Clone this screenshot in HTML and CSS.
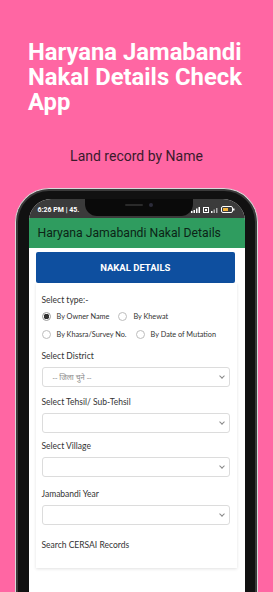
FILE: index.html
```html
<!DOCTYPE html>
<html lang="en">
<head>
  <meta charset="UTF-8" />
  <meta name="viewport" content="width=device-width, initial-scale=1.0" />
  <title>Haryana Jamabandi Nakal Details Check App</title>
  <link rel="stylesheet" href="styles.css">
</head>
<body>
  <h1 class="headline">Haryana Jamabandi Nakal Details Check App</h1>
  <p class="tagline">Land record by Name</p>

  <div class="phone">
    <div class="notch"><span class="speaker"></span><span class="camera"></span></div>
    <div class="screen">
      <div class="status-bar">
        <span class="clock">6:26 PM | 45.</span>
        <span class="status-icons">
          <svg width="10" height="6" viewBox="0 0 10 6"><rect x="0" y="4" width="1.5" height="2" fill="#fff"/><rect x="2.5" y="3" width="1.5" height="3" fill="#fff"/><rect x="5" y="1.5" width="1.5" height="4.5" fill="#fff"/><rect x="7.5" y="0" width="1.5" height="6" fill="#fff"/></svg>
          <svg width="6" height="6" viewBox="0 0 6 6"><rect x="0.5" y="0.5" width="5" height="5" fill="none" stroke="#fff"/><rect x="2" y="2" width="2" height="2" fill="#fff"/></svg>
          <svg width="8" height="6" viewBox="0 0 8 6"><rect x="0" y="4" width="1.5" height="2" fill="#fff"/><rect x="2.5" y="2.5" width="1.5" height="3.5" fill="#aaa"/><rect x="5" y="1" width="1.5" height="5" fill="#aaa"/></svg>
          <svg width="14" height="7" viewBox="0 0 14 7"><rect x="0.5" y="0.5" width="11" height="6" rx="1.5" fill="none" stroke="#fff"/><rect x="2" y="2" width="5" height="3" fill="#f2b33d"/><rect x="12" y="2.5" width="1.5" height="2" fill="#fff"/></svg>
        </span>
      </div>

      <div class="app-bar">Haryana Jamabandi Nakal Details</div>

      <div class="content">
        <div class="card-head">NAKAL DETAILS</div>

        <div class="card-body">
          <div class="label">Select type:-</div>
          <div class="radio-row">
            <span class="radio checked"></span><span class="radio-text">By Owner Name</span>
            <span class="radio"></span><span class="radio-text">By Khewat</span>
          </div>
          <div class="radio-row">
            <span class="radio"></span><span class="radio-text">By Khasra/Survey No.</span>
            <span class="radio"></span><span class="radio-text">By Date of Mutation</span>
          </div>

          <div class="field">
            <div class="label">Select District</div>
            <div class="select"><span class="placeholder">-- जिला चुने --</span><span class="chevron"></span></div>
          </div>

          <div class="field">
            <div class="label">Select Tehsil/ Sub-Tehsil</div>
            <div class="select"><span class="placeholder"></span><span class="chevron"></span></div>
          </div>

          <div class="field tight">
            <div class="label">Select Village</div>
            <div class="select"><span class="placeholder"></span><span class="chevron"></span></div>
          </div>

          <div class="field loose">
            <div class="label">Jamabandi Year</div>
            <div class="select"><span class="placeholder"></span><span class="chevron"></span></div>
          </div>

          <div class="field cersai">
            <div class="label">Search CERSAI Records</div>
          </div>
        </div>
      </div>
    </div>
  </div>
</body>
</html>
```

FILE: styles.css
```css
* {
  box-sizing: border-box;
}

body {
  margin: 0;
  padding: 0;
  background: #ff66a3;
  height: 100vh;
  overflow: hidden;
  font-family: Roboto, "Liberation Sans", sans-serif;
}

.headline {
  margin: 40px 10px 0 28px;
  color: #fff;
  font-size: 23.8px;
  line-height: 25px;
  font-weight: 700;
}

.tagline {
  margin: 32px 0 0;
  text-align: center;
  font-size: 14px;
  line-height: 18px;
  color: #3a1a2b;
}

.phone {
  position: relative;
  margin: 23px 0 0 15px;
  width: 243px;
  height: 420px;
  background: #111;
  border: 1.5px solid #d9d9d9;
  border-bottom: none;
  border-radius: 34px 34px 0 0;
  padding: 10px 12px 0 12.5px;
  box-shadow: inset 0 0 0 2px #3a3a3a;
}

.notch {
  position: absolute;
  top: 10px;
  left: 69px;
  width: 108px;
  height: 17px;
  background: #0a0a0a;
  border-radius: 0 0 12px 12px;
}

.speaker {
  position: absolute;
  left: 40px;
  top: 5px;
  width: 18px;
  height: 2px;
  border-radius: 1px;
  background: #2a2a2a;
}

.camera {
  position: absolute;
  left: 64px;
  top: 4px;
  width: 4px;
  height: 4px;
  border-radius: 50%;
  background: #2c2c3a;
}

.screen {
  height: 100%;
  background: #fff;
  border-radius: 22px 22px 0 0;
  overflow: hidden;
}

.status-bar {
  height: 19px;
  background: #3b3b3b;
  display: flex;
  align-items: center;
  justify-content: space-between;
  padding: 2px 10px 0 9px;
  color: #fff;
  font-size: 7px;
  font-weight: 700;
}

.status-icons {
  display: flex;
  align-items: center;
  gap: 2px;
}

.app-bar {
  height: 30px;
  background: #2f9c5f;
  color: #0c2416;
  font-size: 12.2px;
  line-height: 30px;
  padding-left: 9px;
  white-space: nowrap;
}

.content {
  padding: 4px 10px 0 7px;
}

.card-head {
  height: 31px;
  background: #0e4f9f;
  border-radius: 2px;
  color: #fff;
  font-weight: 700;
  font-size: 9.5px;
  line-height: 31px;
  text-align: center;
}

.card-body {
  height: 285px;
  padding: 11px 7px 0 6px;
  margin-right: -2px;
  box-shadow: 0 1px 3px rgba(0, 0, 0, 0.12);
  font-family: Lato, "Noto Sans", sans-serif;
  color: #333;
}

.label {
  font-size: 8.5px;
  line-height: 12px;
  color: #333;
}

.radio-row {
  display: flex;
  align-items: center;
  height: 14px;
  margin-top: 3px;
  font-size: 7.3px;
  color: #333;
}

.radio-row + .radio-row {
  margin-top: 4px;
}

.radio {
  width: 9px;
  height: 9px;
  border: 1px solid #bdbdbd;
  border-radius: 50%;
  margin-right: 6px;
  flex-shrink: 0;
}

.radio.checked {
  border-color: #9a9a9a;
  background: radial-gradient(circle, #333 0 2.6px, #fff 3px);
}

.radio-text {
  margin-right: 9px;
}

.field {
  margin-top: 9px;
}

.field.tight {
  margin-top: 7px;
}

.field.loose {
  margin-top: 11px;
}

.field.cersai {
  margin-top: 14px;
}

.select {
  margin-top: 5px;
  height: 20px;
  border: 1px solid #dcdcdc;
  border-radius: 3px;
  display: flex;
  align-items: center;
  justify-content: space-between;
  padding: 0 5px 0 10px;
}

.placeholder {
  font-family: "Noto Sans", Lato, sans-serif;
  font-size: 7.5px;
  color: #8a8a8a;
}

.chevron {
  width: 4px;
  height: 4px;
  border-right: 1px solid #888;
  border-bottom: 1px solid #888;
  transform: rotate(45deg);
  margin-top: -2px;
}
```
